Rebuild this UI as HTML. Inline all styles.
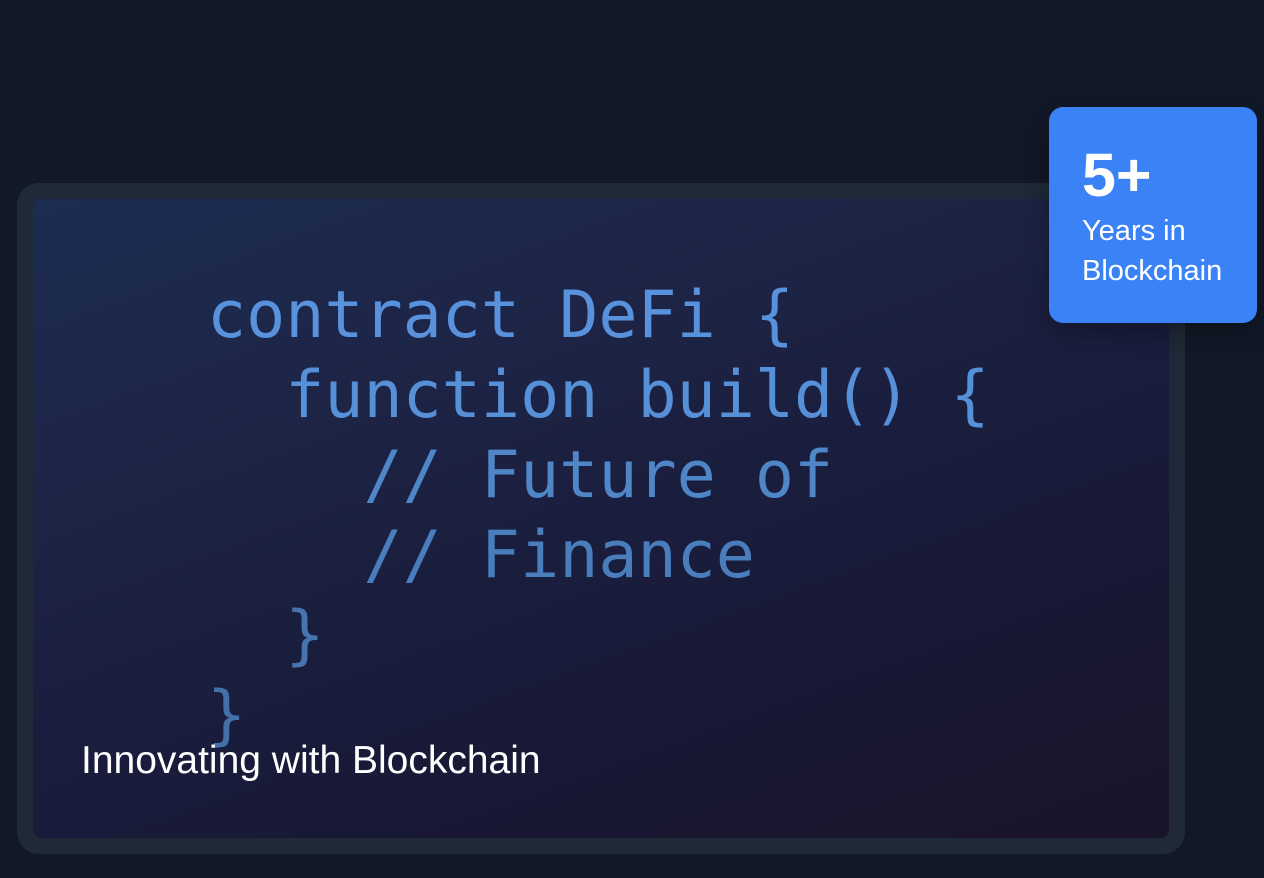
<!DOCTYPE html>
<html><head><style>
html,body{margin:0;padding:0;background:#111827;width:1264px;height:878px;overflow:hidden;font-family:"Liberation Sans",sans-serif}
.frame{position:absolute;left:17px;top:183px;width:1168px;height:671px;background:#1f2937;border-radius:22px}
.panel{position:absolute;left:16px;top:16px;right:16px;bottom:16px;border-radius:8px;background:linear-gradient(160deg,#1c2d52 0%,#1d2446 30%,#181a38 65%,#1a1429 100%);overflow:hidden}
pre{position:absolute;left:174px;top:77px;margin:0;font-family:"DejaVu Sans Mono",monospace;font-size:65px;line-height:80px;color:#5890d8}
.cap{position:absolute;left:48px;top:540px;color:#fff;font-size:39px}
.badge{position:absolute;left:1049px;top:107px;width:208px;height:216px;background:#3b82f6;border-radius:14px;color:#fff;box-shadow:0 10px 25px rgba(0,0,0,.3)}
.n{position:absolute;left:33px;top:38px;font-size:61px;font-weight:bold;line-height:60px}
.t{position:absolute;left:33px;top:104px;font-size:29px;line-height:40px}
</style></head><body>
<div class="frame"><div class="panel">
<pre><span style="color:#5992dc">contract DeFi {</span>
<span style="color:#5690d8">  function build() {</span>
<span style="color:#4f86c8">    // Future of</span>
<span style="color:#4a7dbc">    // Finance</span>
<span style="color:#4674ae">  }</span>
<span style="color:#4370a8">}</span></pre>
<div class="cap">Innovating with Blockchain</div>
</div></div>
<div class="badge"><div class="n">5+</div><div class="t">Years in<br>Blockchain</div></div>
</body></html>
